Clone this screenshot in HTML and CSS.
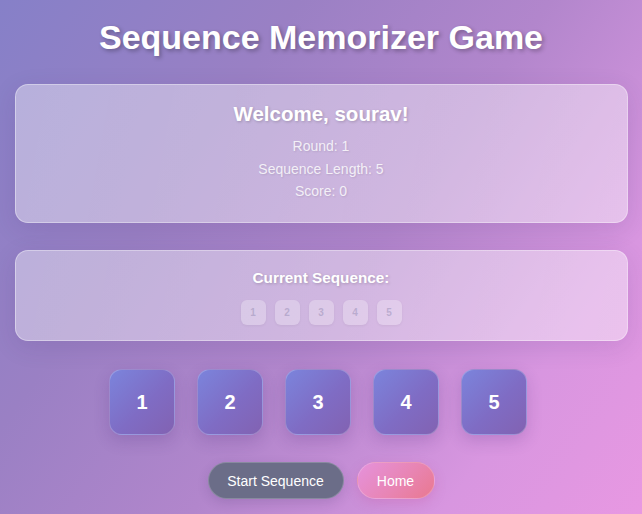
FILE: index.html
```html
<!DOCTYPE html>
<html>
<head>
<meta charset="utf-8">
<link rel="stylesheet" href="styles.css">
</head>
<body>
<main class="app">
  <h1 class="title">Sequence Memorizer Game</h1>
  <section class="card info">
    <h2 class="welcome">Welcome, sourav!</h2>
    <p class="stat">Round: 1</p>
    <p class="stat">Sequence Length: 5</p>
    <p class="stat">Score: 0</p>
  </section>
  <section class="card seq">
    <h3 class="seq-title">Current Sequence:</h3>
    <div class="seq-row">
      <span class="chip">1</span>
      <span class="chip">2</span>
      <span class="chip">3</span>
      <span class="chip">4</span>
      <span class="chip">5</span>
    </div>
  </section>
  <div class="pad">
    <button class="key">1</button>
    <button class="key">2</button>
    <button class="key">3</button>
    <button class="key">4</button>
    <button class="key">5</button>
  </div>
  <div class="actions">
    <button class="btn start">Start Sequence</button>
    <button class="btn home">Home</button>
  </div>
</main>
</body>
</html>
```
FILE: styles.css
```css
html, body {
  margin: 0;
  padding: 0;
  height: 100%;
}
body {
  font-family: "Liberation Sans", Arial, sans-serif;
  background: linear-gradient(125deg, #8680c8 0%, #9a80c4 30%, #b286cc 55%, #d896e0 80%, #e898e2 100%);
  color: #fff;
  overflow: hidden;
}
.app {
  width: 613px;
  margin: 0 auto;
  padding-top: 18px;
  display: flex;
  flex-direction: column;
  align-items: stretch;
}
.title {
  margin: 0 0 27px;
  font-size: 34px;
  line-height: 39px;
  font-weight: 700;
  text-align: center;
  text-shadow: 2px 2px 4px rgba(0, 0, 0, 0.3);
}
.card {
  background: linear-gradient(100deg, rgba(255,255,255,0.38), rgba(255,255,255,0.42));
  border: 1px solid rgba(255, 255, 255, 0.35);
  border-radius: 13px;
  box-shadow: 0 6px 24px rgba(60, 30, 110, 0.12);
  text-align: center;
  box-sizing: border-box;
}
.info {
  height: 139px;
  padding-top: 17px;
}
.welcome {
  margin: 0 0 9px;
  font-size: 20.5px;
  line-height: 24px;
  font-weight: 700;
  text-shadow: 1px 1px 3px rgba(0, 0, 0, 0.2);
}
.stat {
  margin: 0;
  font-size: 14px;
  line-height: 22.5px;
  color: rgba(255, 255, 255, 0.82);
  text-shadow: 1px 1px 2px rgba(0, 0, 0, 0.1);
}
.seq {
  margin-top: 27px;
  height: 91px;
  padding-top: 18px;
}
.seq-title {
  margin: 0 0 14px;
  font-size: 15.3px;
  line-height: 17px;
  font-weight: 700;
  text-shadow: 1px 1px 3px rgba(0, 0, 0, 0.2);
}
.seq-row {
  display: flex;
  justify-content: center;
  gap: 9px;
}
.chip {
  width: 25px;
  height: 25px;
  border-radius: 6px;
  background: rgba(255, 255, 255, 0.28);
  box-shadow: 0 1px 3px rgba(0,0,0,0.05);
  color: rgba(150, 140, 180, 0.5);
  font-size: 10px;
  font-weight: 700;
  display: flex;
  align-items: center;
  justify-content: center;
}
.pad {
  margin-top: 28px;
  padding-right: 6px;
  display: flex;
  justify-content: center;
  gap: 22px;
}
.key {
  width: 66px;
  height: 66px;
  border-radius: 13px;
  border: 1px solid rgba(255, 255, 255, 0.22);
  background: linear-gradient(135deg, #7b84dc 0%, #7f6cc4 55%, #8262b2 100%);
  box-shadow: 0 6px 16px rgba(60, 30, 110, 0.18);
  color: #fff;
  font-family: "Liberation Sans", Arial, sans-serif;
  font-size: 20px;
  font-weight: 700;
  padding: 0;
}
.actions {
  margin-top: 27px;
  display: flex;
  justify-content: center;
  gap: 13px;
}
.btn {
  height: 37px;
  border-radius: 19px;
  font-family: "Liberation Sans", Arial, sans-serif;
  font-size: 14px;
  color: #fff;
  padding: 0;
  border: 1px solid rgba(255, 255, 255, 0.2);
}
.start {
  width: 136px;
  background: #6b6d88;
  box-shadow: 0 4px 12px rgba(40, 30, 80, 0.15);
}
.home {
  width: 78px;
  background: linear-gradient(135deg, #e592dc 0%, #e885b4 55%, #e9788f 100%);
  box-shadow: 0 4px 12px rgba(200, 80, 150, 0.25);
}
```
